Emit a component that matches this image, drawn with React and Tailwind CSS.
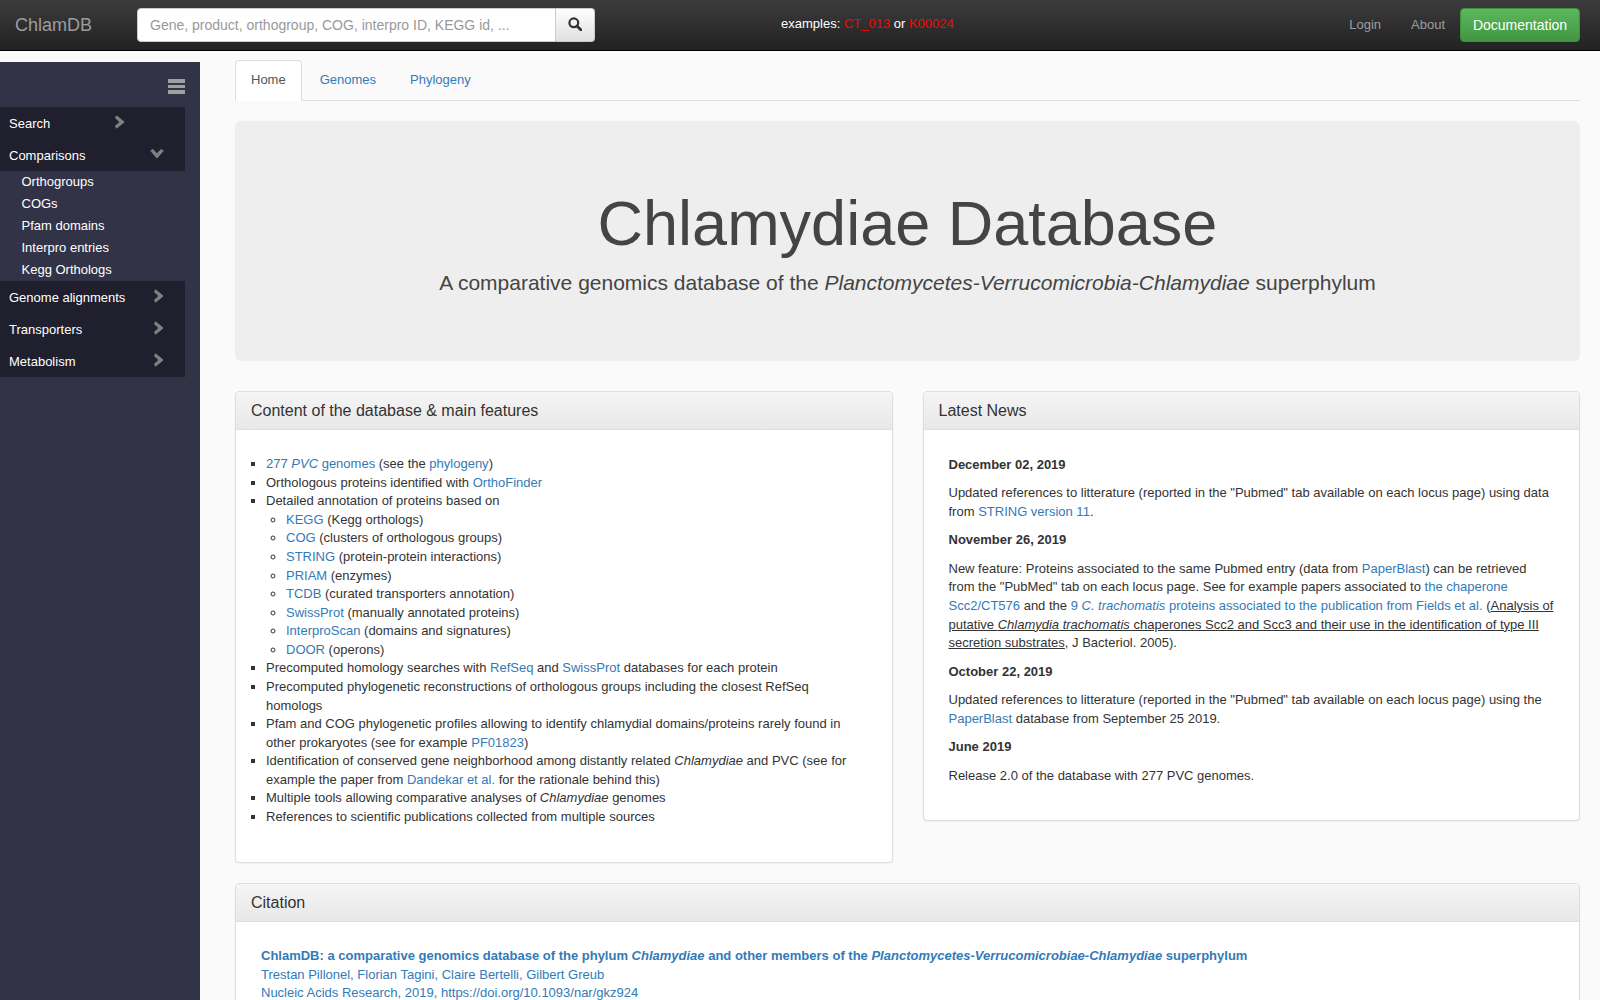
import React from 'react';

const A = ({ children, className = '' }) => <a href="#" className={`text-[#337ab7] ${className}`}>{children}</a>;

const ChevronRight = ({ className = '' }) => (
  <svg viewBox="0 0 12 16" className={`w-[10px] h-[14px] ${className}`} fill="#808080"><path d="M2.6 0.4 L10.6 7 a1.2 1.2 0 0 1 0 1.9 L2.6 15.6 a0.8 0.8 0 0 1 -1.1 0 L0.3 13.6 a0.8 0.8 0 0 1 0 -1 L5.2 8 L0.3 3.4 a0.8 0.8 0 0 1 0 -1 L1.5 0.4 a0.8 0.8 0 0 1 1.1 0 Z" /></svg>
);
const ChevronDown = ({ className = '' }) => (
  <svg viewBox="0 0 16 12" className={`w-[14px] h-[10px] ${className}`} fill="#808080"><path d="M0.4 2.6 L7 10.6 a1.2 1.2 0 0 0 1.9 0 L15.6 2.6 a0.8 0.8 0 0 0 0 -1.1 L13.6 0.3 a0.8 0.8 0 0 0 -1 0 L8 5.2 L3.4 0.3 a0.8 0.8 0 0 0 -1 0 L0.4 1.5 a0.8 0.8 0 0 0 0 1.1 Z" /></svg>
);

const SideItem = ({ label, pr = 'pr-[21px]', children }) => (
  <div className={`h-[32px] flex items-center justify-between pl-[9px] ${pr} text-[13px] text-white`}>
    <span className="pt-[2px]">{label}</span>
    {children || <ChevronRight className="-mt-[3px]" />}
  </div>
);

const PanelHead = ({ children }) => (
  <div className="h-[38px] flex items-center px-[15px] pt-[2px] text-[16px] text-[#333] bg-linear-to-b from-[#f5f5f5] to-[#e8e8e8] border-b border-[#ddd] rounded-t-[3px]">{children}</div>
);

const panel = 'bg-white border border-[#ddd] rounded-[4px] shadow-[0_1px_2px_rgba(0,0,0,0.05)]';

export default function App() {
  return (
    <div className="h-[1000px] overflow-hidden bg-[#fafafa] font-['Liberation_Sans',Arial,sans-serif] text-[13px] leading-[18.57px] text-[#333] flex flex-col">
      <header className="h-[51px] shrink-0 border-b border-black bg-linear-to-b from-[#3c3c3c] to-[#222] flex items-center pl-[15px] pr-[20px]">
        <div className="w-[122px] text-[18px] text-[#9d9d9d]">ChlamDB</div>
        <div className="flex w-[458px] h-[34px]">
          <div className="w-[419px] bg-white border border-[#ccc] rounded-l-[4px] flex items-center pl-[12px] text-[14px] text-[#999]">Gene, product, orthogroup, COG, interpro ID, KEGG id, ...</div>
          <div className="w-[39px] pb-[2px] border border-[#ccc] border-l-0 rounded-r-[4px] bg-linear-to-b from-white to-[#e0e0e0] flex items-center justify-center">
            <svg viewBox="0 0 14 14" className="w-[14px] h-[14px]" fill="none" stroke="#333" strokeWidth="2.2"><circle cx="5.8" cy="5.8" r="4.4" /><path d="M9 9 L13 13" strokeWidth="2.8" strokeLinecap="round" /></svg>
          </div>
        </div>
        <div className="ml-[186px] -mt-[2px] text-white">examples: <span className="text-[#f00]">CT_013</span> or <span className="text-[#f00]">K00024</span></div>
        <div className="ml-auto flex items-center text-[#9d9d9d]">
          <span className="mr-[30px]">Login</span>
          <span className="mr-[15px]">About</span>
          <div className="w-[120px] h-[34px] flex items-center justify-center rounded-[4px] border border-[#3e8f3e] bg-linear-to-b from-[#5cb85c] to-[#419641] text-[14px] text-white">Documentation</div>
        </div>
      </header>

      <div className="flex flex-1 min-h-0">
        <aside className="w-[200px] shrink-0 mt-[11px] bg-[#333348]">
          <div className="h-[45px] flex justify-end items-start pr-[15px] pt-[17px]">
            <div className="w-[17px] flex flex-col gap-[2px]">
              <div className="h-[3.5px] bg-[#a0a0a0]" /><div className="h-[3.5px] bg-[#a0a0a0]" /><div className="h-[3.5px] bg-[#a0a0a0]" />
            </div>
          </div>
          <div className="w-[185px]">
            <div className="bg-[#1f1f2d]">
              <SideItem label="Search" pr="pr-[60px]" />
              <SideItem label="Comparisons" pr="pr-[21px]"><ChevronDown className="-mt-[3px]" /></SideItem>
            </div>
            <div className="text-white">
              {['Orthogroups', 'COGs', 'Pfam domains', 'Interpro entries', 'Kegg Orthologs'].map((t) => (
                <div key={t} className="h-[22px] flex items-center pl-[21.5px]">{t}</div>
              ))}
            </div>
            <div className="bg-[#1f1f2d]">
              <SideItem label="Genome alignments" />
              <SideItem label="Transporters" />
              <SideItem label="Metabolism" />
            </div>
          </div>
        </aside>

        <main className="flex-1 min-w-0 pl-[35px] pr-[20px] pt-[9px]">
          <div className="flex h-[41px] border-b border-[#ddd]">
            <div className="h-[41px] px-[15px] flex items-center bg-white border border-[#ddd] border-b-white rounded-t-[4px] text-[#555]">Home</div>
            <div className="h-[40px] ml-[3px] px-[15px] flex items-center text-[#337ab7]">Genomes</div>
            <div className="h-[40px] ml-[4px] px-[15px] flex items-center text-[#337ab7]">Phylogeny</div>
          </div>

          <section className="mt-[20px] h-[240px] bg-[#eee] rounded-[6px] flex flex-col items-center pt-[68px] text-center">
            <h1 className="text-[63px] leading-[69px] text-[#444]">Chlamydiae Database</h1>
            <p className="mt-[10px] text-[21px] leading-[30px] text-[#444]">A comparative genomics database of the <i>Planctomycetes-Verrucomicrobia-Chlamydiae</i> superphylum</p>
          </section>

          <div className="mt-[30px] flex gap-[30px] items-start">
            <div className={`flex-1 h-[472px] ${panel}`}>
              <PanelHead>Content of the database &amp; main features</PanelHead>
              <div className="pt-[25.2px] pr-[30px]">
                <ul className="list-[square] pl-[30px]">
                  <li><A>277 <i>PVC</i> genomes</A> (see the <A>phylogeny</A>)</li>
                  <li>Orthologous proteins identified with <A>OrthoFinder</A></li>
                  <li>Detailed annotation of proteins based on
                    <ul className="list-[circle] pl-[20px]">
                      <li><A>KEGG</A> (Kegg orthologs)</li>
                      <li><A>COG</A> (clusters of orthologous groups)</li>
                      <li><A>STRING</A> (protein-protein interactions)</li>
                      <li><A>PRIAM</A> (enzymes)</li>
                      <li><A>TCDB</A> (curated transporters annotation)</li>
                      <li><A>SwissProt</A> (manually annotated proteins)</li>
                      <li><A>InterproScan</A> (domains and signatures)</li>
                      <li><A>DOOR</A> (operons)</li>
                    </ul>
                  </li>
                  <li>Precomputed homology searches with <A>RefSeq</A> and <A>SwissProt</A> databases for each protein</li>
                  <li>Precomputed phylogenetic reconstructions of orthologous groups including the closest RefSeq homologs</li>
                  <li>Pfam and COG phylogenetic profiles allowing to identify chlamydial domains/proteins rarely found in other prokaryotes (see for example <A>PF01823</A>)</li>
                  <li>Identification of conserved gene neighborhood among distantly related <i>Chlamydiae</i> and PVC (see for example the paper from <A>Dandekar et al.</A> for the rationale behind this)</li>
                  <li>Multiple tools allowing comparative analyses of <i>Chlamydiae</i> genomes</li>
                  <li>References to scientific publications collected from multiple sources</li>
                </ul>
              </div>
            </div>

            <div className={`flex-1 h-[430px] ${panel}`}>
              <PanelHead>Latest News</PanelHead>
              <div className="pt-[25.6px] px-[25px] [&_p]:mb-[10px]">
                <p><b>December 02, 2019</b></p>
                <p>Updated references to litterature (reported in the "Pubmed" tab available on each locus page) using data from <A>STRING version 11</A>.</p>
                <p><b>November 26, 2019</b></p>
                <p>New feature: Proteins associated to the same Pubmed entry (data from <A>PaperBlast</A>) can be retrieved from the "PubMed" tab on each locus page. See for example papers associated to <A>the chaperone Scc2/CT576</A> and the <A>9 <i>C. trachomatis</i> proteins associated to the publication from Fields et al.</A> (<u>Analysis of putative <i>Chlamydia trachomatis</i> chaperones Scc2 and Scc3 and their use in the identification of type III secretion substrates</u>, J Bacteriol. 2005).</p>
                <p><b>October 22, 2019</b></p>
                <p>Updated references to litterature (reported in the "Pubmed" tab available on each locus page) using the <A>PaperBlast</A> database from September 25 2019.</p>
                <p><b>June 2019</b></p>
                <p>Release 2.0 of the database with 277 PVC genomes.</p>
              </div>
            </div>
          </div>

          <div className={`mt-[20px] h-[200px] ${panel}`}>
            <PanelHead>Citation</PanelHead>
            <div className="pt-[25px] px-[25px] text-[#337ab7]">
              <div><b>ChlamDB: a comparative genomics database of the phylum <i>Chlamydiae</i> and other members of the <i>Planctomycetes-Verrucomicrobiae-Chlamydiae</i> superphylum</b></div>
              <div>Trestan Pillonel, Florian Tagini, Claire Bertelli, Gilbert Greub</div>
              <div>Nucleic Acids Research, 2019, https://doi.org/10.1093/nar/gkz924</div>
            </div>
          </div>
        </main>
      </div>
    </div>
  );
}
